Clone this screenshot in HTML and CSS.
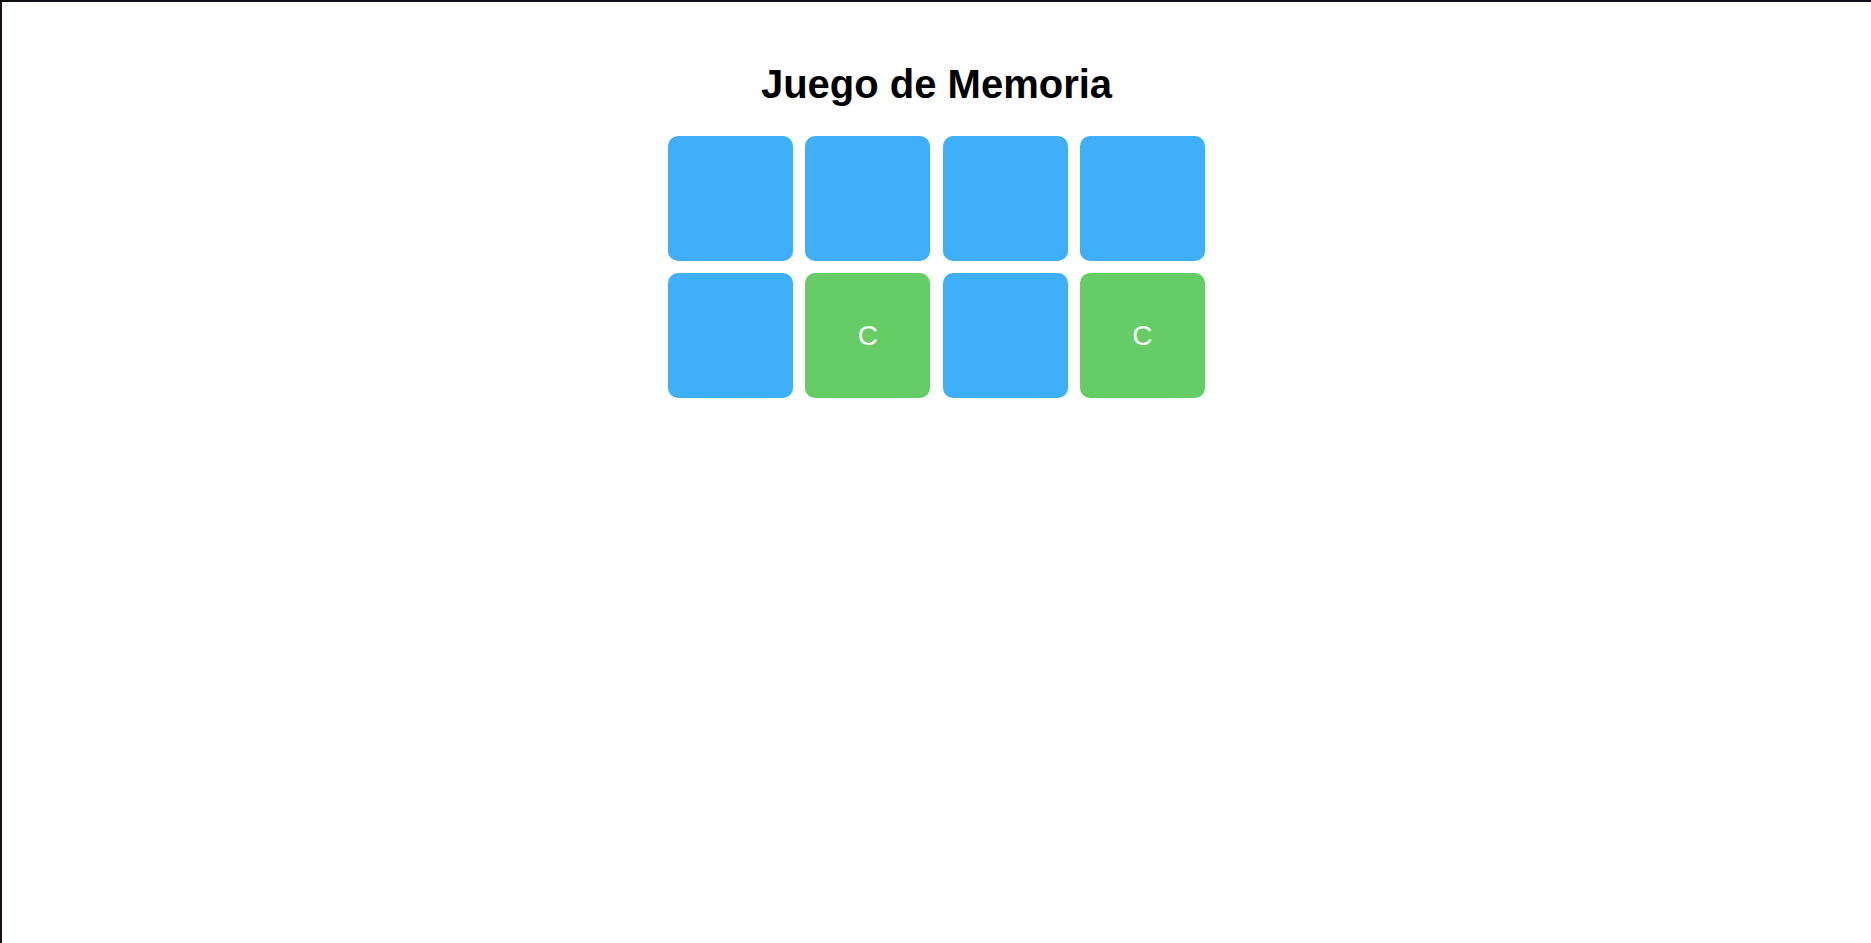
FILE: index.html
```html
<!DOCTYPE html>
<html lang="es">
<head>
<meta charset="utf-8">
<title>Juego de Memoria</title>
<link rel="stylesheet" href="styles.css">
</head>
<body>
<div class="frame">
  <h1 class="title">Juego de Memoria</h1>
  <div class="board">
    <div class="card"></div>
    <div class="card"></div>
    <div class="card"></div>
    <div class="card"></div>
    <div class="card"></div>
    <div class="card matched">C</div>
    <div class="card"></div>
    <div class="card matched">C</div>
  </div>
</div>
</body>
</html>
```

FILE: styles.css
```css
html, body {
  margin: 0;
  padding: 0;
  height: 100%;
  background: #ffffff;
}
body {
  font-family: "Liberation Sans", Arial, sans-serif;
}
.frame {
  box-sizing: border-box;
  height: 100%;
  border-top: 2px solid #111016;
  border-left: 2px solid #1a1016;
  display: flex;
  flex-direction: column;
  align-items: center;
}
.title {
  margin: 59px 0 0;
  font-size: 40px;
  line-height: 46px;
  font-weight: bold;
  color: #000;
}
.board {
  margin-top: 29px;
  display: grid;
  grid-template-columns: repeat(4, 125px);
  grid-auto-rows: 125px;
  gap: 12.33px;
}
.card {
  background: #3faffa;
  border-radius: 10px;
  display: flex;
  align-items: center;
  justify-content: center;
  color: #ffffff;
  font-size: 28px;
}
.card.matched {
  background: #66cc66;
}
```
